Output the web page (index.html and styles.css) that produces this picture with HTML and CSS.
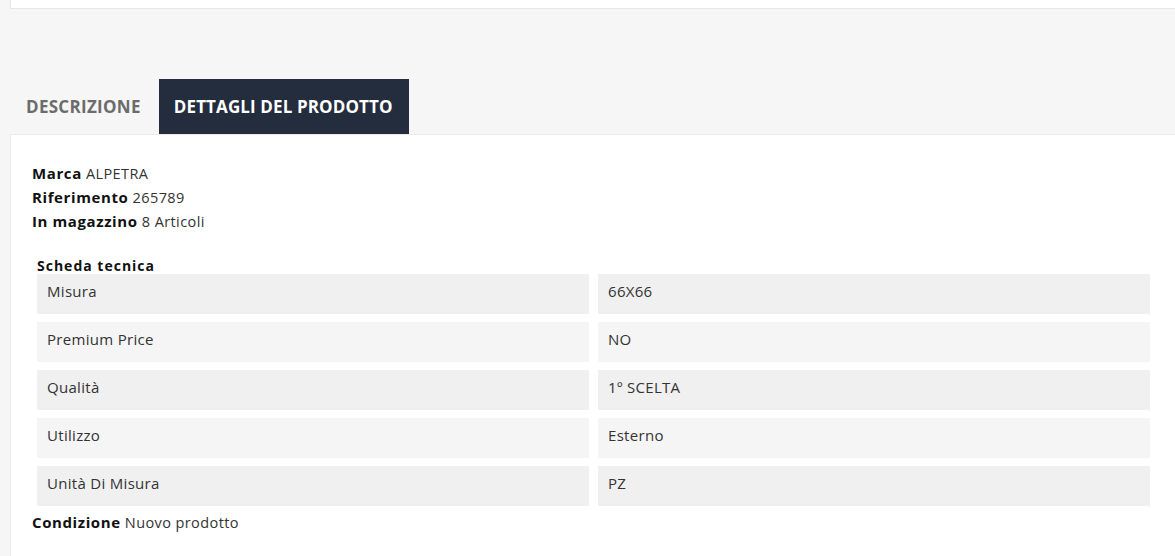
FILE: index.html
```html
<!DOCTYPE html>
<html lang="it">
<head>
<meta charset="utf-8">
<link rel="stylesheet" href="styles.css">
</head>
<body>
<div class="page">
  <div class="topbox"></div>
  <div class="tabs">
    <div class="tab">DESCRIZIONE</div>
    <div class="tab active">DETTAGLI DEL PRODOTTO</div>
  </div>
  <div class="panel">
    <div class="info"><b>Marca</b> ALPETRA</div>
    <div class="info"><b>Riferimento</b> 265789</div>
    <div class="info"><b>In magazzino</b> 8 Articoli</div>
    <div class="sheet">
      <div class="sheet-title">Scheda tecnica</div>
      <div class="grid">
        <div class="cell odd">Misura</div><div class="cell odd">66X66</div>
        <div class="cell even">Premium Price</div><div class="cell even">NO</div>
        <div class="cell odd">Qualità</div><div class="cell odd">1º SCELTA</div>
        <div class="cell even">Utilizzo</div><div class="cell even">Esterno</div>
        <div class="cell odd">Unità Di Misura</div><div class="cell odd">PZ</div>
      </div>
    </div>
    <div class="info cond"><b>Condizione</b> Nuovo prodotto</div>
  </div>
</div>
</body>
</html>
```
FILE: styles.css
```css
html, body {
  margin: 0;
  padding: 0;
  background: #f6f6f6;
  overflow: hidden;
  height: 556px;
}
body {
  font-family: "Open Sans", "Liberation Sans", sans-serif;
  color: #232323;
}
.page {
  margin-left: 11px;
  width: 1166px;
}
.topbox {
  height: 8px;
  background: #fff;
  border-left: 1px solid #e6e6e6;
  border-bottom: 1px solid #e6e6e6;
  box-sizing: content-box;
  margin-left: -1px;
}
.tabs {
  display: flex;
  margin-top: 70px;
  height: 55px;
}
.tab {
  display: flex;
  align-items: center;
  padding: 0 15px 1px;
  font-weight: 700;
  font-size: 17px;
  color: #6c6c6c;
  letter-spacing: 0.3px;
}
.tab.active {
  margin-left: 3px;
  background: #232d3d;
  color: #fff;
  padding: 0 16px 1px 15px;
  letter-spacing: 0.12px;
}
.panel {
  background: #fff;
  border-top: 1px solid #ebebeb;
  border-left: 1px solid #ebebeb;
  margin-left: -1px;
  padding: 26px 0 30px 21px;
}
.info {
  height: 24px;
  font-size: 14.5px;
  line-height: 24px;
  color: #333;
  letter-spacing: 0.4px;
}
.info b {
  font-size: 15px;
  line-height: 24px;
  color: #111;
  letter-spacing: 0.6px;
}
.sheet {
  margin-top: 25px;
  padding-left: 5px;
}
.sheet-title {
  font-weight: 700;
  font-size: 14px;
  line-height: 16px;
  color: #111;
  letter-spacing: 1px;
}
.grid {
  display: grid;
  grid-template-columns: 552px 552px;
  column-gap: 9px;
  row-gap: 8px;
}
.cell {
  height: 40px;
  box-sizing: border-box;
  display: flex;
  align-items: center;
  padding: 0 0 7px 10px;
  font-size: 15px;
  color: #333;
  letter-spacing: 0.3px;
}
.cell.odd { background: #f0f0f0; }
.cell.even { background: #f5f5f5; }
.cond {
  margin-top: 4px;
}
```
